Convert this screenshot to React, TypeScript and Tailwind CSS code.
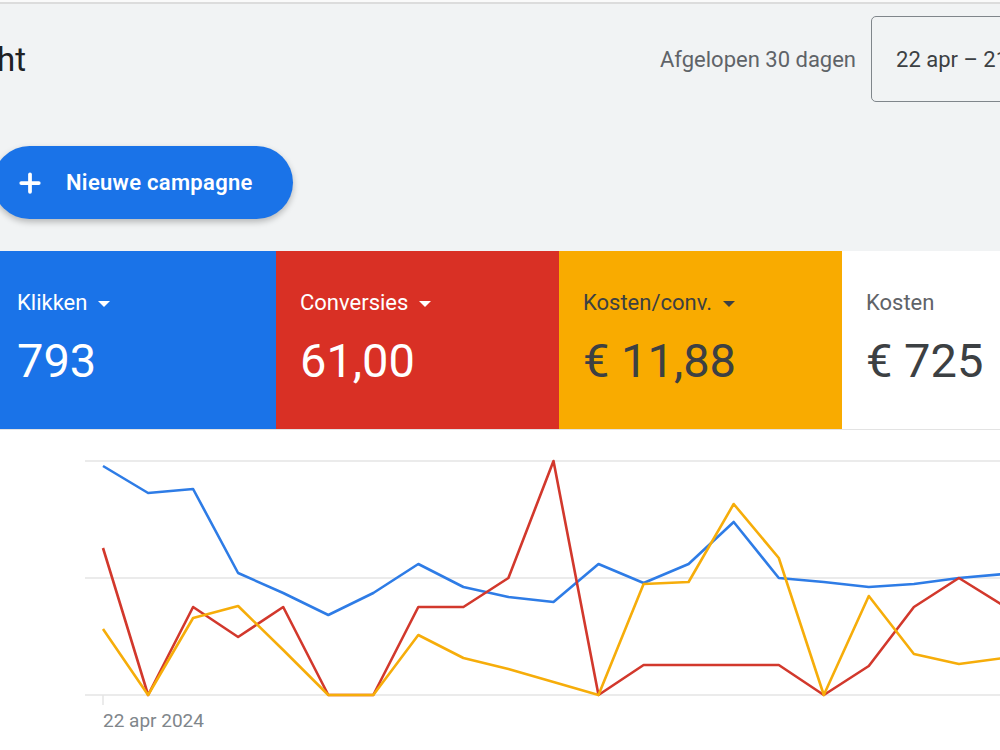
import { Plus } from 'lucide-react';

const xs = Array.from({ length: 21 }, (_, i) => 103 + i * 45.05);

const blue = [465, 492, 488, 572, 592, 614, 592, 563, 586, 596, 601, 563, 582, 563, 521, 577, 581, 586, 583, 577, 573];
const red = [547, 694, 606, 636, 606, 694, 694, 606, 606, 577, 460, 694, 664, 664, 664, 664, 694, 665, 606, 577, 605];
const yellow = [628, 694, 617, 605, 649, 694, 694, 634, 657, 668, 681, 694, 583, 581, 503, 557, 694, 595, 653, 663, 657];

const toPoints = (ys: number[]) => ys.map((y, i) => `${xs[i].toFixed(1)},${y}`).join(' ');

const cards = [
  { label: 'Klikken', value: '793', bg: 'bg-[#1a73e8]', text: 'text-white', labelText: 'text-white', caret: true },
  { label: 'Conversies', value: '61,00', bg: 'bg-[#d93025]', text: 'text-white', labelText: 'text-white', caret: true },
  { label: 'Kosten/conv.', value: '€ 11,88', bg: 'bg-[#f9ab00]', text: 'text-[#3c4043]', labelText: 'text-[#3c4043]', caret: true },
  { label: 'Kosten', value: '€ 725', bg: 'bg-white', text: 'text-[#3c4043]', labelText: 'text-[#5f6368]', caret: false },
];

function Caret({ className }: { className: string }) {
  return (
    <svg width="12" height="6" viewBox="0 0 12 6" className={className}>
      <path d="M0 0 L12 0 L6 6 Z" fill="currentColor" />
    </svg>
  );
}

export default function App() {
  return (
    <div className="w-[1000px] h-[750px] overflow-hidden bg-[#f1f3f4] font-['Roboto',sans-serif] flex flex-col">
      <div className="h-[4px] bg-[#fafafa] border-b-2 border-[#dcdcdc] shrink-0" />

      <div className="-ml-[7px] w-[1150px] shrink-0">
        {/* Header */}
        <div className="flex items-center h-[86px] mt-[12px]">
          <div className="w-[33px] overflow-hidden flex justify-end shrink-0">
            <h1 className="text-[33px] leading-none whitespace-nowrap text-[#202124]">Overzicht</h1>
          </div>
          <span className="ml-[634px] text-[22px] text-[#5f6368] whitespace-nowrap">Afgelopen 30 dagen</span>
          <div className="ml-[15px] h-[86px] border border-[#80868b] rounded-[5px] px-[24px] flex items-center text-[22px] text-[#3c4043] whitespace-nowrap">
            22 apr – 21 mei 2024
          </div>
        </div>

        {/* New campaign */}
        <button
          type="button"
          className="mt-[44px] h-[73px] w-[300px] rounded-full bg-[#1a73e8] text-white flex items-center pl-[22px] shadow-[0_3px_6px_rgba(0,0,0,0.25)]"
        >
          <Plus className="w-[30px] h-[30px]" strokeWidth={3} />
          <span className="ml-[21px] text-[22px] font-semibold tracking-[0.3px]">Nieuwe campagne</span>
        </button>

        {/* Metric cards */}
        <div className="mt-[32px] flex h-[178px]">
          {cards.map((c) => (
            <div key={c.label} className={`${c.bg} w-[283px] shrink-0 pl-[24px] pt-[39px]`}>
              <div className={`flex items-center leading-[26px] text-[22px] ${c.labelText}`}>
                <span>{c.label}</span>
                {c.caret && <Caret className="ml-[11px] mt-[1px]" />}
              </div>
              <div className={`mt-[17px] leading-[56px] text-[47px] ${c.text}`}>{c.value}</div>
            </div>
          ))}
        </div>
      </div>

      {/* Chart */}
      <div className="flex-1 bg-white border-t border-[#e3e3e3]">
        <svg width="1000" height="275" viewBox="0 429 1000 275" className="block">
          {[460, 577, 694].map((y) => (
            <line key={y} x1="85" x2="1000" y1={y} y2={y} stroke="#e4e4e4" strokeWidth="1.5" />
          ))}
          <line x1="103" x2="103" y1="694" y2="704" stroke="#e4e4e4" strokeWidth="1.5" />
          <polyline points={toPoints(blue)} fill="none" stroke="#2e7ce6" strokeWidth="2.6" strokeLinejoin="round" />
          <polyline points={toPoints(red)} fill="none" stroke="#d2382c" strokeWidth="2.6" strokeLinejoin="round" />
          <polyline points={toPoints(yellow)} fill="none" stroke="#f6ad0a" strokeWidth="2.6" strokeLinejoin="round" />
        </svg>
        <div className="pl-[103px] pt-[2px] text-[19px] text-[#80868b]">22 apr 2024</div>
      </div>
    </div>
  );
}
